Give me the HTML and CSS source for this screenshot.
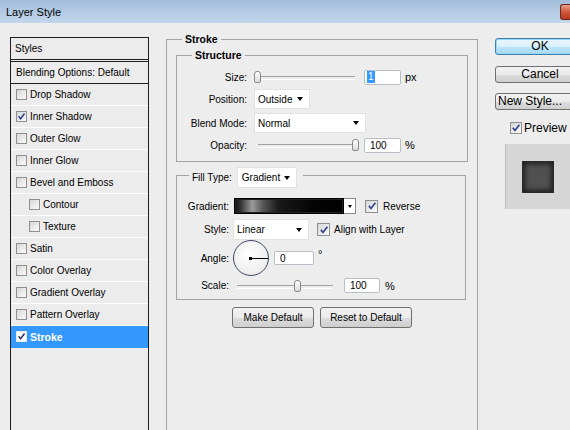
FILE: index.html
```html
<!DOCTYPE html>
<html>
<head>
<meta charset="utf-8">
<title>Layer Style</title>
<link rel="stylesheet" href="styles.css">
</head>
<body>
<div class="titlebar"><span class="title">Layer Style</span><span class="close"></span></div>
<div class="main">
  <div class="styles-panel">
    <div class="hdr hdr-styles">Styles</div>
    <div class="hdr hdr-blend">Blending Options: Default</div>
    <div class="item"><span class="cb"></span>Drop Shadow</div>
    <div class="item"><span class="cb"><svg viewBox="0 0 11 11" width="9" height="9"><path d="M2 5.2 L4.4 8.2 L9.2 1.8" fill="none" stroke="#2b3f8c" stroke-width="1.8"/></svg></span>Inner Shadow</div>
    <div class="item"><span class="cb"></span>Outer Glow</div>
    <div class="item"><span class="cb"></span>Inner Glow</div>
    <div class="item"><span class="cb"></span>Bevel and Emboss</div>
    <div class="item sub"><span class="cb"></span>Contour</div>
    <div class="item sub"><span class="cb"></span>Texture</div>
    <div class="item"><span class="cb"></span>Satin</div>
    <div class="item"><span class="cb"></span>Color Overlay</div>
    <div class="item"><span class="cb"></span>Gradient Overlay</div>
    <div class="item"><span class="cb"></span>Pattern Overlay</div>
    <div class="item selected"><span class="cb cb-white"><svg viewBox="0 0 11 11" width="9" height="9"><path d="M2 5.2 L4.4 8.2 L9.2 1.8" fill="none" stroke="#2b2f6c" stroke-width="1.8"/></svg></span>Stroke</div>
  </div>

  <fieldset class="group stroke">
    <legend class="lg-stroke">Stroke</legend>
    <fieldset class="group structure">
      <legend class="lg-structure">Structure</legend>
      <div class="row r-size">
        <span class="lbl">Size:</span>
        <div class="slider"><span class="thumb" style="left:0px"></span></div>
        <div class="field f-size"><span class="sel-text">1</span></div>
        <span class="unit">px</span>
      </div>
      <div class="row r-pos">
        <span class="lbl">Position:</span>
        <div class="dd dd-pos"><span>Outside</span><i class="tri"></i></div>
      </div>
      <div class="row r-blend">
        <span class="lbl">Blend Mode:</span>
        <div class="dd dd-blend"><span>Normal</span><i class="tri"></i></div>
      </div>
      <div class="row r-opacity">
        <span class="lbl">Opacity:</span>
        <div class="slider"><span class="thumb" style="left:98px"></span></div>
        <div class="field f-size">100</div>
        <span class="unit">%</span>
      </div>
    </fieldset>

    <fieldset class="group fill">
      <legend class="lg-fill"><span class="fill-lbl">Fill Type:</span><div class="dd dd-fill"><span>Gradient</span><i class="tri"></i></div></legend>
      <div class="row r-grad">
        <span class="lbl">Gradient:</span>
        <div class="gradpick"><div class="grad"></div><div class="gradarrow"><i class="tri tri-sm"></i></div></div>
        <span class="cb cb-lg cb-rev"><svg viewBox="0 0 11 11" width="10" height="10"><path d="M2 5.2 L4.4 8.2 L9.2 1.8" fill="none" stroke="#2b3f8c" stroke-width="1.8"/></svg></span>
        <span class="cbtext">Reverse</span>
      </div>
      <div class="row r-style">
        <span class="lbl">Style:</span>
        <div class="dd dd-style"><span>Linear</span><i class="tri"></i></div>
        <span class="cb cb-lg cb-align"><svg viewBox="0 0 11 11" width="10" height="10"><path d="M2 5.2 L4.4 8.2 L9.2 1.8" fill="none" stroke="#2b3f8c" stroke-width="1.8"/></svg></span>
        <span class="cbtext">Align with Layer</span>
      </div>
      <div class="row r-angle">
        <span class="lbl">Angle:</span>
        <div class="dial"><span class="dot"></span></div>
        <div class="field f-angle">0</div>
        <span class="deg">°</span>
      </div>
      <div class="row r-scale">
        <span class="lbl">Scale:</span>
        <div class="slider slider-scale"><span class="thumb" style="left:61px"></span></div>
        <div class="field f-scale">100</div>
        <span class="unit unit-scale">%</span>
      </div>
    </fieldset>

    <div class="defaults">
      <button class="btn btn-make">Make Default</button>
      <button class="btn btn-reset">Reset to Default</button>
    </div>
  </fieldset>

  <div class="side">
    <button class="bigbtn ok">OK</button>
    <button class="bigbtn cancel">Cancel</button>
    <button class="bigbtn newstyle">New Style...</button>
    <div class="preview-check"><span class="cb cb-lg"><svg viewBox="0 0 11 11" width="10" height="10"><path d="M2 5.2 L4.4 8.2 L9.2 1.8" fill="none" stroke="#2b3f8c" stroke-width="1.8"/></svg></span><span class="pv-text">Preview</span></div>
    <div class="preview"><div class="swatch"></div></div>
  </div>
</div>
</body>
</html>
```

FILE: styles.css
```css
* { box-sizing: border-box; }
html, body { margin: 0; padding: 0; }
body {
  width: 570px;
  height: 430px;
  overflow: hidden;
  background: #ededed;
  font-family: "Liberation Sans", Arial, sans-serif;
  font-size: 10px;
  color: #000;
}

/* title bar */
.titlebar {
  height: 23px;
  display: flex;
  align-items: flex-start;
  background: linear-gradient(#a3bedb, #c3d7ec);
}
.title {
  font-size: 11px;
  line-height: 13px;
  padding: 6px 0 0 6px;
}
.close {
  margin-left: auto;
  margin-top: 4px;
  width: 10px;
  height: 16px;
  border: 1px solid #6d2a1c;
  border-right: none;
  border-radius: 3px 0 0 3px;
  background: linear-gradient(#e7a08c, #d0583c 50%, #b8361f);
}

.main {
  display: flex;
  align-items: flex-start;
  padding-left: 10px;
}

/* left styles list */
.styles-panel {
  flex-shrink: 0;
  width: 139px;
  height: 400px;
  margin-top: 14px;
  border: 1px solid #1e1e1e;
  background: #ececec;
}
.hdr {
  display: flex;
  align-items: center;
  padding-left: 4px;
}
.hdr-styles {
  height: 22px;
  border-bottom: 1px solid #1e1e1e;
}
.hdr-blend {
  height: 23px;
  margin-top: 1px;
  border-top: 1px solid #1e1e1e;
  border-bottom: 1px solid #1e1e1e;
  padding-left: 5px;
}
.item {
  display: flex;
  align-items: center;
  height: 22px;
  padding-left: 5px;
  border-bottom: 1px solid #fbfbfb;
}
.item.sub { padding-left: 18px; }
.item.selected {
  background: #3399ff;
  color: #fff;
  font-weight: bold;
  font-size: 10.5px;
  border-bottom-color: #3399ff;
}

.cb {
  flex-shrink: 0;
  display: inline-flex;
  align-items: center;
  justify-content: center;
  width: 11px;
  height: 11px;
  margin-right: 3px;
  border: 1px solid #8e8f8f;
  background: linear-gradient(135deg, #d6d6d6, #fbfbfb);
}
.cb-white { background: #fff; border-color: #e6e6e6; }
.cb-lg { width: 13px; height: 13px; }

/* group boxes */
fieldset.group {
  margin: 0;
  padding: 0;
  min-width: 0;
  border: 1px solid #a4a4a4;
}
legend {
  padding: 0 3px;
  line-height: 13px;
}
fieldset.stroke {
  flex-shrink: 0;
  width: 312px;
  height: 400px;
  margin-left: 17px;
  margin-top: 10px;
  padding: 3px 9px 0 9px;
}
.lg-stroke, .lg-structure {
  font-weight: bold;
  font-size: 10.5px;
}
.lg-stroke { margin-left: 6px; }
.lg-structure { margin-left: 15px; }

fieldset.structure {
  padding: 7px 0 8px 0;
}
.row {
  display: flex;
  align-items: center;
}
.lbl {
  flex-shrink: 0;
  width: 70px;
  margin-right: 7px;
  text-align: right;
}
.r-size { height: 16px; }
.r-pos { height: 20px; margin-top: 4px; }
.r-blend { height: 20px; margin-top: 4px; }
.r-opacity { height: 16px; margin-top: 4px; }

/* slider */
.slider {
  position: relative;
  width: 105px;
  height: 14px;
  flex-shrink: 0;
}
.slider::before {
  content: "";
  position: absolute;
  left: 4px;
  right: 4px;
  top: 6px;
  height: 2px;
  border-top: 1px solid #a2a2a2;
  border-bottom: 1px solid #fff;
}
.thumb {
  position: absolute;
  top: 1px;
  width: 7px;
  height: 12px;
  border: 1px solid #8a8a8a;
  border-radius: 3px 3px 2px 2px;
  background: linear-gradient(#fff, #dadada);
}

.field {
  flex-shrink: 0;
  height: 15px;
  background: #fff;
  border: 1px solid #b8bec6;
  border-radius: 2px;
  display: flex;
  align-items: center;
  padding-left: 5px;
}
.f-size { width: 37px; margin-left: 5px; }
.r-size .f-size { padding-left: 2px; }
.sel-text {
  background: #3399ff;
  color: #fff;
  padding: 0 1px;
  line-height: 12px;
}
.unit { margin-left: 4px; font-size: 11px; }

/* dropdowns */
.dd {
  flex-shrink: 0;
  display: flex;
  align-items: center;
  justify-content: space-between;
  height: 20px;
  padding: 0 6px 0 3px;
  background: #fff;
  border: 1px solid #e2e2e2;
}
.dd-pos { width: 56px; }
.dd-blend { width: 112px; }
.tri {
  display: block;
  width: 0;
  height: 0;
  border-left: 3.5px solid transparent;
  border-right: 3.5px solid transparent;
  border-top: 4px solid #000;
}
.tri-sm {
  border-left-width: 2.5px;
  border-right-width: 2.5px;
  border-top-width: 3px;
}

/* fill type group */
fieldset.fill {
  margin: 5px 2px 0 0;
  padding: 14px 0 6px 0;
}
.lg-fill {
  display: flex;
  align-items: flex-start;
  height: 17px;
  margin-left: 12px;
  padding: 0 6px 0 3px;
}
.fill-lbl {
  line-height: 21px;
  height: 21px;
  margin-right: 5px;
}
.dd-fill {
  width: 60px;
  height: 21px;
  padding-left: 4px;
}
.fill .lbl { width: 52px; margin-right: 4px; }
.r-grad { height: 16px; }
.r-style { height: 21px; margin-top: 5px; }
.r-angle { height: 36px; }
.r-scale { height: 15px; margin-top: 2px; }

.gradpick { display: flex; flex-shrink: 0; }
.r-grad .lbl { margin-right: 5px; }
.grad {
  width: 110px;
  height: 16px;
  border: 1px solid #000;
  background: linear-gradient(90deg, #0d0d0d 0%, #3a3a3a 6%, #9a9a9a 16%, #555 26%, #1a1a1a 40%, #050505 70%, #000 100%);
  box-shadow: inset 0 0 0 1px #222;
}
.gradarrow {
  width: 12px;
  height: 16px;
  border: 1px solid #8a8a8a;
  border-left: none;
  background: #fff;
  display: flex;
  align-items: center;
  justify-content: center;
}
.cb-rev { margin-left: 9px; }
.cbtext { margin-left: 1px; }
.r-grad .cbtext { margin-left: 2px; }
.dd-style { width: 76px; height: 21px; }
.cb-align { margin-left: 8px; }

.dial {
  flex-shrink: 0;
  position: relative;
  width: 36px;
  height: 36px;
  border: 1.5px solid #3f4566;
  border-radius: 50%;
  background: radial-gradient(circle at 45% 40%, #ffffff, #e6e6e6);
}
.dial::after {
  content: "";
  position: absolute;
  left: 50%;
  top: 50%;
  width: 50%;
  height: 1px;
  margin-top: -0.5px;
  background: #000;
}
.dot {
  position: absolute;
  left: 50%;
  top: 50%;
  width: 3px;
  height: 3px;
  margin: -1.5px 0 0 -2px;
  background: #000;
}
.f-angle { width: 40px; height: 14px; margin-left: 5px; }
.deg { margin-left: 4px; align-self: flex-start; margin-top: 8px; font-size: 11px; }

.slider-scale { width: 104px; }
.f-scale { width: 36px; margin-left: 7px; }
.unit-scale { margin-left: 5px; }

.defaults {
  display: flex;
  justify-content: center;
  gap: 6px;
  margin-top: 7px;
}
.btn {
  height: 21px;
  font-family: "Liberation Sans", Arial, sans-serif;
  font-size: 10px;
  color: #000;
  border: 1px solid #707070;
  border-radius: 3px;
  background: linear-gradient(#f2f2f2 0%, #ebebeb 50%, #dddddd 51%, #cfcfcf 100%);
  padding: 0;
}
.btn-make { width: 82px; }
.btn-reset { width: 92px; }

/* right side */
.side {
  flex-shrink: 0;
  width: 90px;
  margin-left: 17px;
  margin-top: 15px;
  display: flex;
  flex-direction: column;
}
.bigbtn {
  width: 90px;
  height: 17px;
  padding: 0;
  font-family: "Liberation Sans", Arial, sans-serif;
  font-size: 12px;
  line-height: 15px;
  color: #000;
  border: 1px solid #707070;
  border-radius: 3px;
  background: linear-gradient(#f2f2f2 0%, #ebebeb 50%, #dddddd 51%, #cfcfcf 100%);
}
.ok {
  border-color: #3c7fb1;
  background: linear-gradient(#eaf6fd 0%, #d9f0fc 50%, #bee6fd 51%, #a7d9f5 100%);
  box-shadow: inset 0 0 0 1px #9bd6f5;
}
.cancel { margin-top: 11px; }
.newstyle {
  margin-top: 10px;
  text-align: left;
  padding-left: 2px;
  white-space: nowrap;
  overflow: hidden;
}
.preview-check {
  display: flex;
  align-items: center;
  margin-top: 11px;
  padding-left: 15px;
  height: 14px;
}
.preview-check .cb { width: 12px; height: 12px; margin-right: 1px; }
.pv-text { font-size: 12px; margin-left: 1px; }
.preview {
  margin-top: 9px;
  margin-left: 10px;
  width: 70px;
  height: 65px;
  background: #d6d6d6;
  border-left: 1px solid #bdbdbd;
  padding: 17px 0 0 16px;
}
.swatch {
  width: 32px;
  height: 32px;
  background: #505050;
  box-shadow: inset 0 0 5px 2px #1f1f1f;
  border: 1px solid #2a2a2a;
}
```
